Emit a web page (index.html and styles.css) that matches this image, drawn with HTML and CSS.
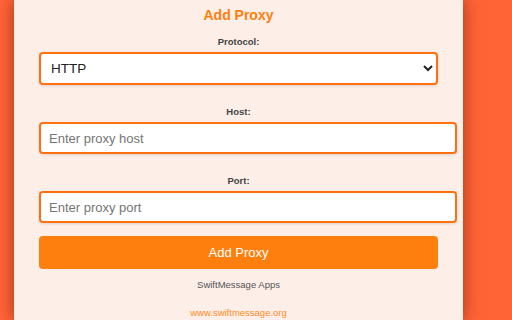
FILE: index.html
```html
<!DOCTYPE html>
<html lang="en">
<head>
<meta charset="utf-8">
<title>Add Proxy</title>
<link rel="stylesheet" href="styles.css">
</head>
<body>
  <div class="panel">
    <h2 class="title">Add Proxy</h2>
    <div class="field">
      <label class="label" for="protocol">Protocol:</label>
      <select id="protocol" class="select">
        <option>HTTP</option>
        <option>HTTPS</option>
        <option>SOCKS4</option>
        <option>SOCKS5</option>
      </select>
    </div>
    <div class="field">
      <label class="label" for="host">Host:</label>
      <input id="host" class="input" type="text" placeholder="Enter proxy host">
    </div>
    <div class="field">
      <label class="label" for="port">Port:</label>
      <input id="port" class="input" type="text" placeholder="Enter proxy port">
    </div>
    <button class="btn" type="button">Add Proxy</button>
    <p class="credit">SwiftMessage Apps</p>
    <a class="site" href="#">www.swiftmessage.org</a>
  </div>
</body>
</html>
```

FILE: styles.css
```css
html, body {
  margin: 0;
  padding: 0;
  height: 100%;
  overflow: hidden;
}
body {
  background: #ff6436;
  font-family: "Liberation Sans", Arial, sans-serif;
}
.panel {
  box-sizing: border-box;
  margin-left: 14px;
  width: 449px;
  height: 100%;
  padding: 7px 25px 0 25px;
  background: #fdeee8;
  box-shadow: 0 0 16px rgba(80, 20, 0, 0.55);
  display: flex;
  flex-direction: column;
}
.title {
  margin: 0;
  font-size: 14px;
  line-height: 16px;
  font-weight: bold;
  color: #ff7f0e;
  text-align: center;
}
.field {
  display: flex;
  flex-direction: column;
  margin-top: 13px;
}
.field + .field {
  margin-top: 21px;
}
.label {
  display: block;
  font-size: 9.5px;
  line-height: 12px;
  font-weight: bold;
  color: #444;
  text-align: center;
  margin-bottom: 4px;
}
.select {
  box-sizing: border-box;
  width: 100%;
  height: 33px;
  padding: 0 6px;
  border: 2px solid #ff7010;
  border-radius: 4px;
  background: #fff;
  font-family: "Liberation Sans", Arial, sans-serif;
  font-size: 13.5px;
  color: #222;
  box-shadow: 0 1px 3px rgba(0, 0, 0, 0.12);
}
.input {
  box-sizing: content-box;
  width: 100%;
  height: 28px;
  padding: 0 7px 0 8px;
  border: 2px solid #ff7010;
  border-radius: 4px;
  background: #fff;
  font-family: "Liberation Sans", Arial, sans-serif;
  font-size: 13px;
  color: #222;
  outline: none;
  box-shadow: 0 1px 3px rgba(0, 0, 0, 0.12);
}
.input::placeholder {
  color: #757575;
}
.btn {
  flex: none;
  margin-top: 13px;
  height: 33px;
  width: 100%;
  border: none;
  border-radius: 4px;
  background: #ff7f0e;
  color: #fff;
  font-family: "Liberation Sans", Arial, sans-serif;
  font-size: 13px;
}
.credit {
  margin: 10px 0 0;
  font-size: 9.5px;
  line-height: 12px;
  color: #555;
  text-align: center;
}
.site {
  margin-top: 16px;
  font-size: 9.5px;
  line-height: 12px;
  color: #ff8a24;
  text-align: center;
  text-decoration: none;
}
```
